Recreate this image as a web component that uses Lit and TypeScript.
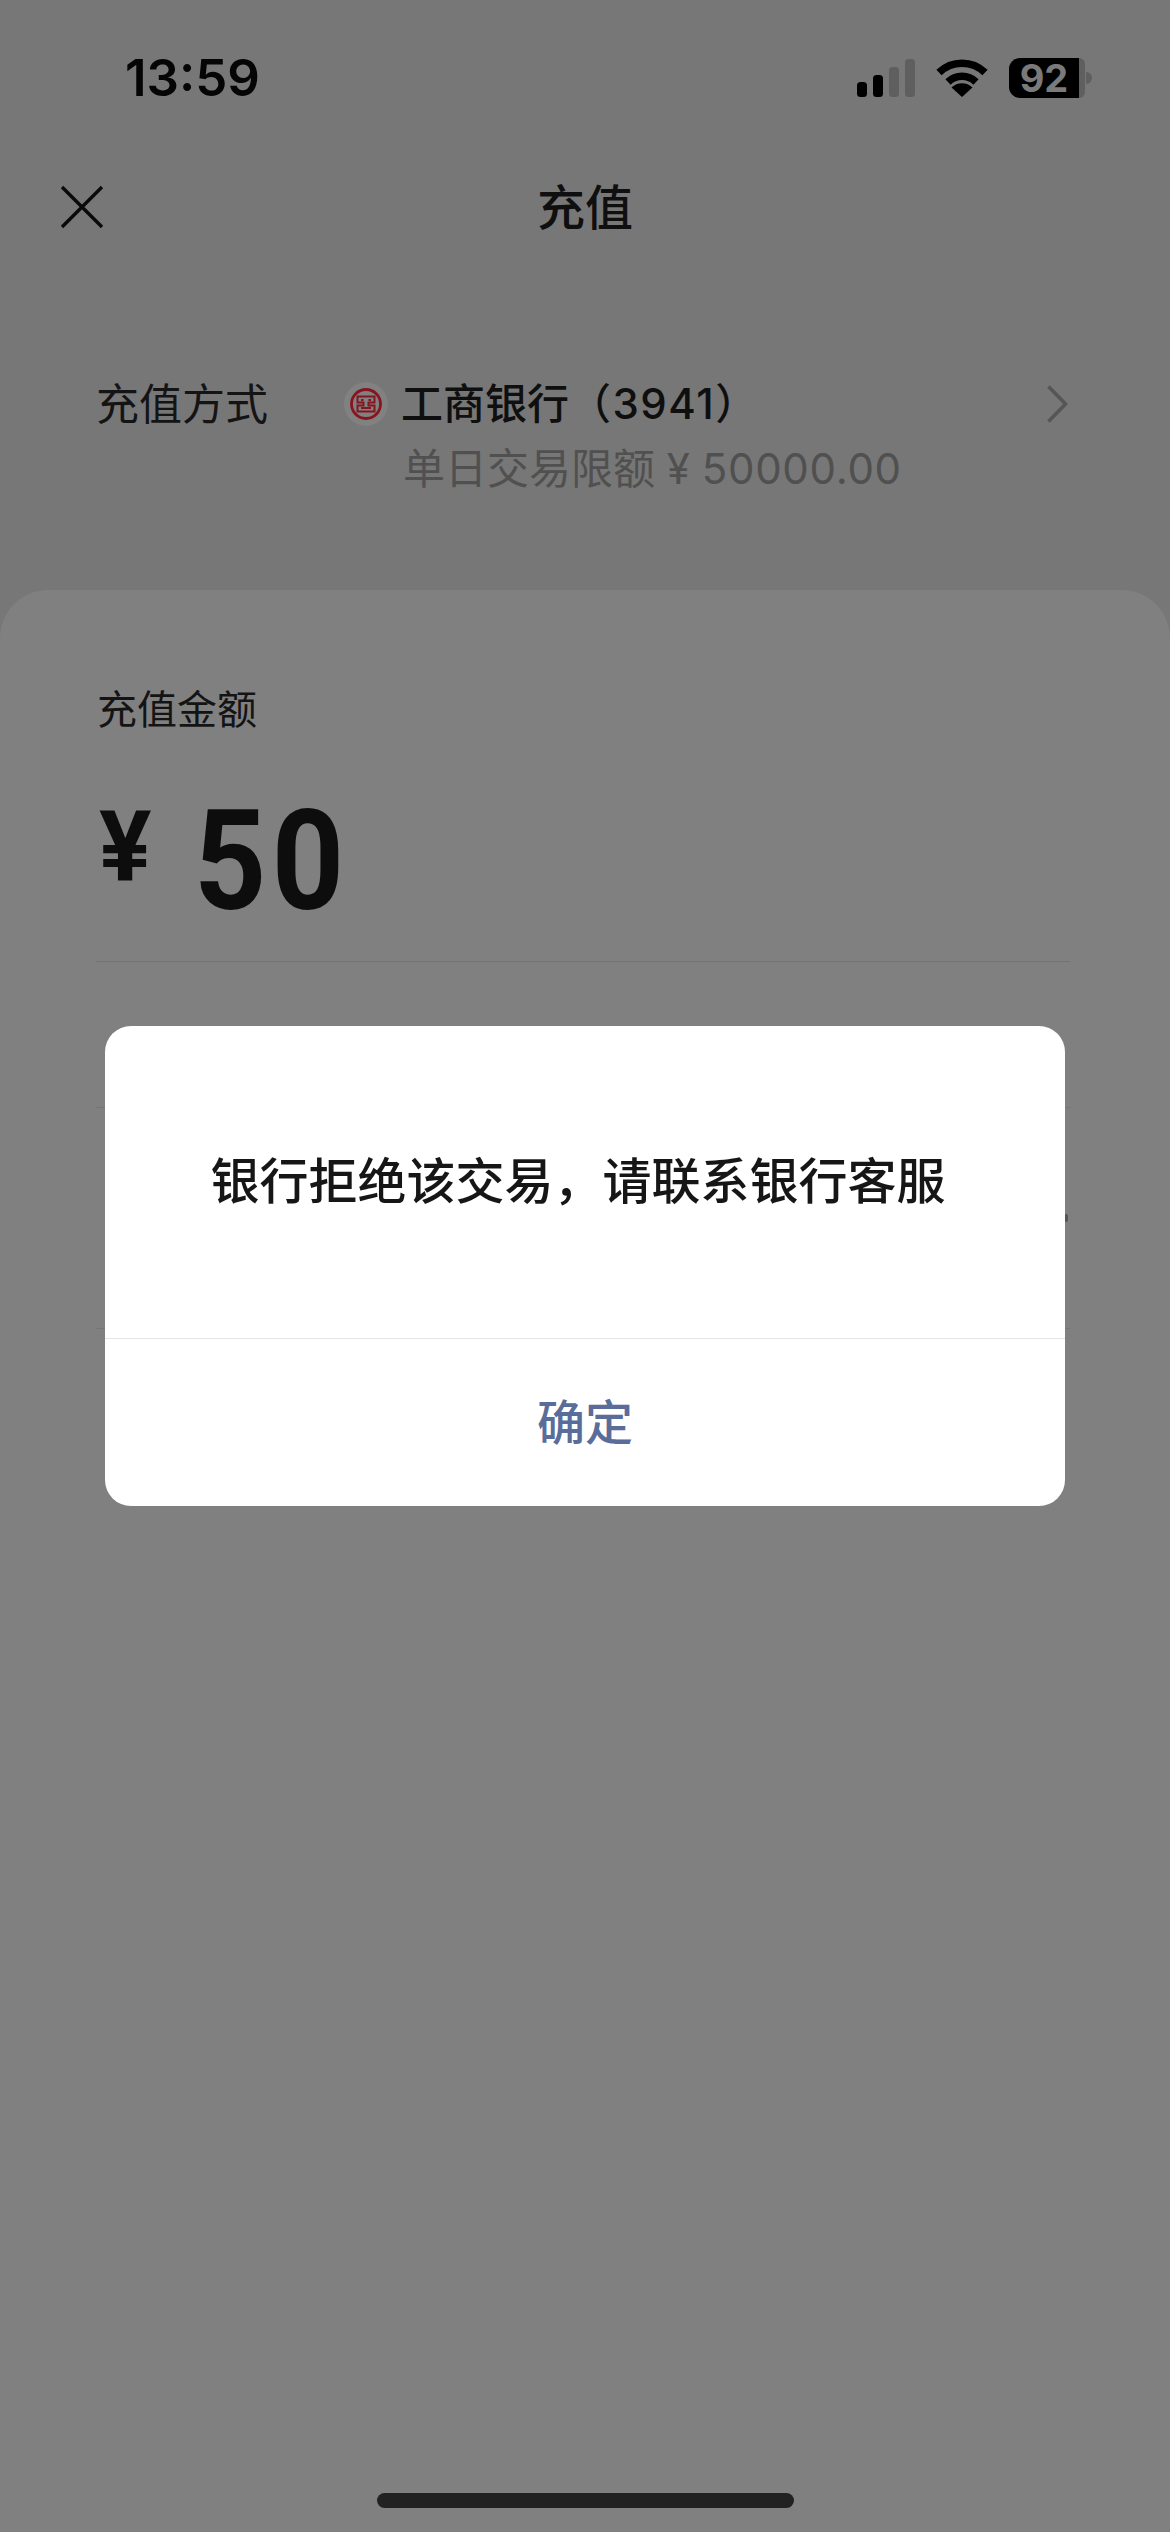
import { LitElement, html, css, svg } from 'lit';
import { customElement } from 'lit/decorators.js';

@customElement('app-root')
class AppRoot extends LitElement {
    static styles = css`
        :host {
            display: block;
            width: 1170px;
            height: 2532px;
            position: relative;
            overflow: hidden;
            background: #777777;
            font-family: 'Inter', 'Noto Sans CJK SC', sans-serif;
            color: #0f0f0f;
        }

        .page {
            display: flex;
            flex-direction: column;
            height: 100%;
        }

        .status {
            display: flex;
            justify-content: space-between;
            align-items: center;
            height: 57px;
            margin-top: 49px;
            padding: 0 78px 0 125px;
            flex: none;
        }
        .time {
            font-size: 51px;
            line-height: 57px;
            font-weight: 600;
            color: #050505;
        }
        .status-icons {
            display: flex;
            align-items: center;
            gap: 21px;
        }
        .battery {
            display: flex;
            align-items: center;
        }
        .battery-body {
            display: flex;
            align-items: center;
            justify-content: center;
            width: 70px;
            height: 40px;
            background: #000;
            border-radius: 11px 0 0 11px;
            color: #7a7a7a;
            font-size: 38px;
            line-height: 40px;
            font-weight: 700;
        }
        .battery-rest {
            width: 6px;
            height: 40px;
            background: #5f5f5f;
            border-radius: 0 10px 10px 0;
        }
        .battery-nub {
            width: 6px;
            height: 12px;
            margin-left: 1px;
            background: #5f5f5f;
            border-radius: 0 6px 6px 0;
        }

        .nav {
            display: flex;
            align-items: center;
            justify-content: center;
            position: relative;
            height: 64px;
            margin-top: 70px;
            flex: none;
        }
        .close {
            position: absolute;
            left: 60px;
            top: 9px;
        }
        .title {
            font-size: 48px;
            line-height: 64px;
            font-weight: 500;
        }

        .method {
            display: flex;
            padding: 0 102px 0 96px;
            margin-top: 134px;
            height: 216px;
            flex: none;
        }
        .method-label {
            width: 244px;
            font-size: 43px;
            line-height: 60px;
            color: #141414;
            flex: none;
        }
        .bank {
            flex: 1;
            margin-left: 4px;
        }
        .bank-line {
            display: flex;
            align-items: center;
            height: 60px;
        }
        .bank-logo {
            margin-right: 13px;
            flex: none;
        }
        .bank-name {
            flex: 1;
            font-size: 42px;
            line-height: 60px;
            font-weight: 500;
        }
        .bank-tail {
            letter-spacing: 1.5px;
        }
        .limit {
            margin: 5px 0 0 59px;
            font-size: 42px;
            line-height: 60px;
            color: #505050;
            white-space: nowrap;
        }
        .limit-num {
            letter-spacing: 0.7px;
        }

        .sheet {
            flex: 1;
            display: flex;
            flex-direction: column;
            background: #808080;
            border-radius: 48px 48px 0 0;
            padding: 0 100px 0 96px;
        }
        .amount-label {
            margin: 92px 0 0 1px;
            font-size: 40px;
            line-height: 56px;
            color: #141414;
        }
        .amount {
            display: flex;
            align-items: center;
            height: 140px;
            margin-top: 53px;
            padding-left: 3px;
            font-family: 'Roboto', sans-serif;
            font-weight: 700;
            color: #0d0d0d;
        }
        .currency {
            font-size: 98px;
            line-height: 140px;
            margin-top: -26px;
            width: 95px;
        }
        .value {
            display: inline-block;
            font-size: 140px;
            line-height: 140px;
            letter-spacing: 6px;
            transform: scaleX(0.9);
            transform-origin: left center;
        }
        .row {
            height: 145px;
            flex: none;
            border-bottom: 1px solid #767676;
        }
        .row.first {
            height: 0;
            margin-top: 30px;
            border-bottom-color: #737373;
        }
        .row.tall {
            height: 220px;
            position: relative;
        }
        .dot {
            position: absolute;
            right: 2px;
            top: 106px;
            width: 4px;
            height: 8px;
            border-radius: 2px;
            background: #555;
        }
        .home {
            width: 417px;
            height: 15px;
            margin: auto auto 0;
            position: relative;
            top: -24px;
            left: 2px;
            background: #222222;
            border-radius: 8px;
        }

        .dialog {
            position: absolute;
            left: 105px;
            top: 1026px;
            width: 960px;
            height: 480px;
            background: #fff;
            border-radius: 26px;
            display: flex;
            flex-direction: column;
        }
        .message {
            height: 312px;
            display: flex;
            align-items: center;
            justify-content: center;
            padding-right: 14px;
            font-size: 49px;
            line-height: 64px;
            font-weight: 500;
            color: #161616;
            border-bottom: 1px solid #e6e6e6;
            flex: none;
        }
        .confirm {
            flex: 1;
            display: flex;
            align-items: center;
            justify-content: center;
            font-size: 48px;
            line-height: 64px;
            font-weight: 500;
            color: #5a6d9a;
        }
    `;

    render() {
        return html`
            <div class="page">
                <div class="status">
                    <span class="time">13:59</span>
                    <div class="status-icons">
                        ${this.renderSignal()} ${this.renderWifi()}
                        <div class="battery">
                            <div class="battery-body">92</div>
                            <div class="battery-rest"></div>
                            <div class="battery-nub"></div>
                        </div>
                    </div>
                </div>
                <div class="nav">
                    <svg class="close" width="44" height="44" viewBox="0 0 44 44">
                        <path d="M2 2 L42 42 M42 2 L2 42" stroke="#0a0a0a" stroke-width="3.4" fill="none" />
                    </svg>
                    <span class="title">充值</span>
                </div>
                <div class="method">
                    <div class="method-label">充值方式</div>
                    <div class="bank">
                        <div class="bank-line">
                            ${this.renderBankLogo()}
                            <span class="bank-name">工商银行<span class="bank-tail">（3941）</span></span>
                            <svg width="22" height="38" viewBox="0 0 22 38">
                                <path d="M2.5 1.5 L19.5 19 L2.5 36.5" stroke="#555555" stroke-width="3.6" fill="none" />
                            </svg>
                        </div>
                        <div class="limit">单日交易限额 ¥ <span class="limit-num">50000.00</span></div>
                    </div>
                </div>
                <div class="sheet">
                    <div class="amount-label">充值金额</div>
                    <div class="amount">
                        <span class="currency">¥</span>
                        <span class="value">50</span>
                    </div>
                    <div class="row first"></div>
                    <div class="row"></div>
                    <div class="row tall"><span class="dot"></span></div>
                    <div class="home"></div>
                </div>
            </div>
            <div class="dialog">
                <div class="message">银行拒绝该交易，请联系银行客服</div>
                <div class="confirm">确定</div>
            </div>
        `;
    }

    renderSignal() {
        const bars = [
            { x: 0, h: 15, fill: '#000' },
            { x: 16, h: 22, fill: '#000' },
            { x: 32, h: 30, fill: '#5f5f5f' },
            { x: 48, h: 38, fill: '#5f5f5f' },
        ];
        return html`
            <svg width="58" height="38" viewBox="0 0 58 38">
                ${bars.map(
                    (b) => svg`<rect x=${b.x} y=${38 - b.h} width="10" height=${b.h} rx="3.5" fill=${b.fill}></rect>`
                )}
            </svg>
        `;
    }

    renderWifi() {
        return html`
            <svg width="52" height="38" viewBox="0 0 52 38">
                <path d="M3 13.5 A33 33 0 0 1 49 13.5" stroke="#000" stroke-width="7.5" fill="none" />
                <path d="M12 23 A20 20 0 0 1 40 23" stroke="#000" stroke-width="7.5" fill="none" />
                <path d="M26 38 L15.5 28.5 A15 15 0 0 1 36.5 28.5 Z" fill="#000" />
            </svg>
        `;
    }

    renderBankLogo() {
        return html`
            <svg class="bank-logo" width="44" height="44" viewBox="0 0 44 44">
                <circle cx="22" cy="22" r="22" fill="#818181" />
                <circle cx="22" cy="22" r="14.5" fill="none" stroke="#86151f" stroke-width="2.8" />
                <path
                    d="M13.5 14.5 H30.5 V20.5 H24.5 V23.5 H30.5 V29.5 H13.5 V23.5 H19.5 V20.5 H13.5 Z M17 18 H19.5 M24.5 18 H27 M17 26 H27"
                    fill="none"
                    stroke="#86151f"
                    stroke-width="2"
                />
            </svg>
        `;
    }
}

declare global {
    interface HTMLElementTagNameMap {
        'app-root': AppRoot;
    }
}
